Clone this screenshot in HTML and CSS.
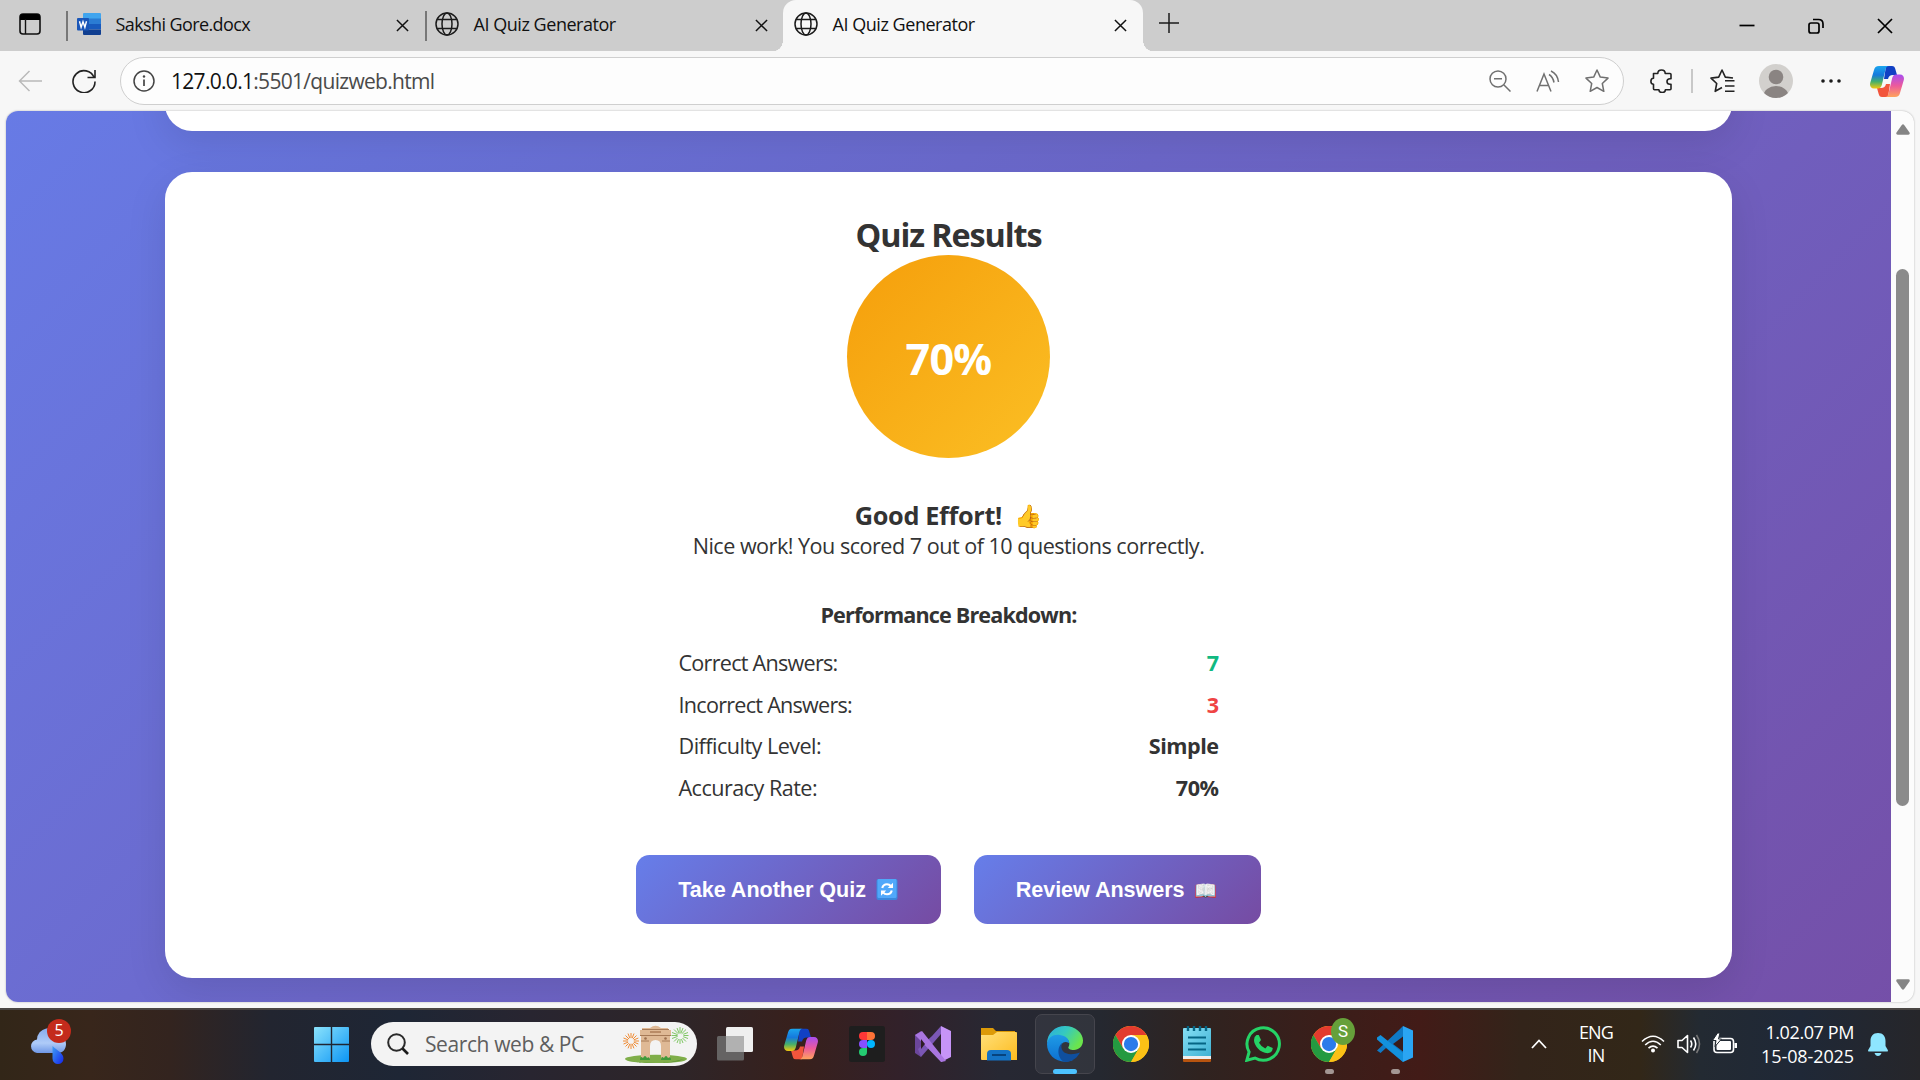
FILE: index.html
```html
<!DOCTYPE html>
<html lang="en">
<head>
<meta charset="utf-8">
<title>AI Quiz Generator</title>
<link rel="stylesheet" href="styles.css">
</head>
<body>
<svg class="defs" width="0" height="0" aria-hidden="true">
  <defs>
    <linearGradient id="cpA" x1="0" y1="0" x2="0" y2="1"><stop offset="0" stop-color="#1ba6ee"/><stop offset=".4" stop-color="#1579dd"/><stop offset=".7" stop-color="#46b06a"/><stop offset="1" stop-color="#f3c80e"/></linearGradient>
    <linearGradient id="cpB" x1="0" y1="0" x2="0" y2="1"><stop offset="0" stop-color="#a84df0"/><stop offset=".5" stop-color="#ec5a9c"/><stop offset="1" stop-color="#ffa45c"/></linearGradient>
    <linearGradient id="win" x1="0" y1="0" x2="1" y2="1"><stop offset="0" stop-color="#8be3fc"/><stop offset="1" stop-color="#0c95f5"/></linearGradient>
    <linearGradient id="cloud" x1="0" y1="0" x2="0" y2="1"><stop offset="0" stop-color="#86abee"/><stop offset=".6" stop-color="#afcbf8"/><stop offset="1" stop-color="#6f97e6"/></linearGradient>
    <linearGradient id="drop" x1="0" y1="0" x2="1" y2="1"><stop offset="0" stop-color="#3fa0f5"/><stop offset="1" stop-color="#1424ec"/></linearGradient>
    <linearGradient id="edgeTop" x1="0" y1="0" x2="1" y2=".5"><stop offset="0" stop-color="#2aa9e0"/><stop offset=".5" stop-color="#35c9c0"/><stop offset="1" stop-color="#6be54c"/></linearGradient>
    <linearGradient id="edgeLeft" x1="0" y1="0" x2="0" y2="1"><stop offset="0" stop-color="#1f9be6"/><stop offset="1" stop-color="#0c6fd0"/></linearGradient>
    <linearGradient id="folder" x1="0" y1="0" x2="1" y2="1"><stop offset="0" stop-color="#ffe07a"/><stop offset="1" stop-color="#fdbb1e"/></linearGradient>
    <linearGradient id="note" x1="0" y1="0" x2="1" y2="1"><stop offset="0" stop-color="#86dff5"/><stop offset="1" stop-color="#3fb2d3"/></linearGradient>
    <symbol id="close" viewBox="0 0 14 14"><path d="M1 1l12 12M13 1L1 13" stroke="#111" stroke-width="1.6" fill="none"/></symbol>
    <symbol id="globe" viewBox="0 0 24 24"><g fill="none" stroke="#1b1b1b" stroke-width="1.5"><circle cx="12" cy="12" r="11"/><ellipse cx="12" cy="12" rx="5" ry="11"/><path d="M2 7.6h20M2 16.4h20"/></g></symbol>
    <symbol id="copilot" viewBox="0 0 34 31">
      <path d="M16 0h6c2 0 2.800 1 3.300 3l1.700 6h-4c-3 0-4.300 1.500-5 4l-4 0z" fill="#1140c4"/>
      <path d="M18 31h-6c-2 0-2.800-1-3.300-3L7 22h4c3 0 4.300-1.500 5-4h4z" fill="#f2553c"/>
      <path id="ribbon" d="M9 0h10c-2 0-3 1.500-3.500 3.500L11.800 19c-.7 2.500-2 3.500-4 3.500H4C.8 22.500-.5 20 .2 17L4 4C4.700 1.500 6 0 9 0z" fill="url(#cpA)"/>
      <path d="M25 31H15c2 0 3-1.500 3.500-3.500L22.200 12c.7-2.500 2-3.500 4-3.500H30c3.200 0 4.500 2.500 3.800 5.500L30 27c-.7 2.500-2 4-5 4z" fill="url(#cpB)"/>
    </symbol>
    <symbol id="chrome" viewBox="0 0 48 48">
      <circle cx="24" cy="24" r="24" fill="#fbc116"/>
      <path d="M3.200 12A24 24 0 0 1 44.800 12H24L13.600 30z" fill="#e33b2e"/>
      <path d="M3.200 12A24 24 0 0 0 24 48L34.400 30 24 24 13.600 30z" fill="#249a41"/>
      <path d="M44.800 12H24l10.400 18L24 48A24 24 0 0 0 44.800 12z" fill="#fbc116"/>
      <circle cx="24" cy="24" r="12" fill="#fff"/><circle cx="24" cy="24" r="9.500" fill="#2b7bea"/>
    </symbol>
  </defs>
</svg>

<div class="screen">
  <header class="tabstrip">
    <svg class="workspaces" viewBox="0 0 22 22"><rect x="1" y="1" width="20" height="20" rx="3" fill="none" stroke="#111" stroke-width="1.6"/><path d="M1 7V4q0-3 3-3h14q3 0 3 3v3z" fill="#000"/><path d="M6.500 6v15" stroke="#111" stroke-width="1.400"/></svg>
    <div class="tab">
      <svg class="favicon" viewBox="0 0 24 22"><path d="M6 1q0-1 1-1h16q1 0 1 1v5H6z" fill="#41a5ee"/><path d="M6 5.500h18V11H6z" fill="#2b7cd3"/><path d="M6 11h18v5.500H6z" fill="#185abd"/><path d="M6 16.500h18V21q0 1-1 1H7q-1 0-1-1z" fill="#103f91"/><rect y="5" width="12" height="12.500" rx="1" fill="#1a56b8"/><path d="M2.500 8.300l1.600 6L6 8.700l1.900 5.600 1.600-6" fill="none" stroke="#fff" stroke-width="1.400"/></svg>
      <span class="tab-title docx">Sakshi Gore.docx</span>
      <svg class="x"><use href="#close"/></svg>
    </div>
    <div class="tab">
      <svg class="favicon"><use href="#globe"/></svg>
      <span class="tab-title">AI Quiz Generator</span>
      <svg class="x"><use href="#close"/></svg>
    </div>
    <div class="tab active">
      <svg class="favicon"><use href="#globe"/></svg>
      <span class="tab-title">AI Quiz Generator</span>
      <svg class="x"><use href="#close"/></svg>
    </div>
    <svg class="new-tab" viewBox="0 0 22 22"><path d="M11 1v20M1 11h20" stroke="#1b1b1b" stroke-width="1.500"/></svg>
    <div class="window-buttons">
      <svg viewBox="0 0 16 16"><path d="M.5 7.500h15" stroke="#000" stroke-width="1.700"/></svg>
      <svg viewBox="0 0 16 16"><rect x="1" y="5" width="10" height="10" rx="2" fill="none" stroke="#000" stroke-width="1.700"/><path d="M5 1.500h5.500q4.500 0 4.500 4.500v4" fill="none" stroke="#000" stroke-width="1.700"/></svg>
      <svg viewBox="0 0 16 16"><path d="M1 1l14 14M15 1L1 15" stroke="#000" stroke-width="1.700"/></svg>
    </div>
  </header>

  <nav class="toolbar">
    <svg class="back" viewBox="0 0 24 22"><path d="M24 11H1.500M11.500 1l-10 10 10 10" fill="none" stroke="#b9b9b9" stroke-width="1.500"/></svg>
    <svg class="reload" viewBox="0 0 24 24"><path d="M22.200 8.500A11 11 0 1 0 23 12.500M23 1v7.500h-7.500" fill="none" stroke="#222" stroke-width="1.600"/></svg>
    <div class="address">
      <svg class="info" viewBox="0 0 22 22"><circle cx="11" cy="11" r="10" fill="none" stroke="#444" stroke-width="1.500"/><path d="M11 9.500v6.500" stroke="#444" stroke-width="1.700"/><circle cx="11" cy="6.500" r="1.200" fill="#444"/></svg>
      <span class="url"><b>127.0.0.1</b>:5501/quizweb.html</span>
      <div class="address-actions">
        <svg width="22" height="22" viewBox="0 0 22 22"><g fill="none" stroke="#707070" stroke-width="1.500"><circle cx="9" cy="9" r="8"/><path d="M15 15l6.500 6.500M5 8.700h8"/></g></svg>
        <svg width="24" height="22" viewBox="0 0 24 22"><g fill="none" stroke="#707070" stroke-width="1.500"><path d="M1 21.500L8 4l7 17.500M3.500 15.500h9M13 4.500q4 2.500 5 8M15 1q6.500 3 7.500 11"/></g></svg>
        <svg width="24" height="24" viewBox="0 0 24 24"><path d="M12 1l3.300 7.100 7.700 1-5.700 5.400 1.500 7.800L12 18.500l-6.800 3.800 1.500-7.800L1 9.100l7.700-1z" fill="none" stroke="#707070" stroke-width="1.500" stroke-linejoin="round"/></svg>
      </div>
    </div>
    <svg class="puzzle" viewBox="0 0 22 24"><path d="M3.500 4.500h4.300C7.800 2.300 9.500 1 11.500 1s3.700 1.300 3.700 3.500H20q1 0 1 1v4.300h-1c-2 0-3 1.200-3 2.700s1 2.700 3 2.700h1v4.500q0 1-1 1h-4.600c0 1.800-1.300 2.800-3.200 2.800s-3.300-1-3.300-2.800H4.500q-1 0-1-1v-4.400C1.800 15.300.9 14 .9 12.300s.9-3 2.600-3z" fill="none" stroke="#222" stroke-width="1.600" stroke-linejoin="round"/></svg>
    <i class="rule"></i>
    <svg class="favs" viewBox="0 0 25 24"><path d="M12 18.500l-6.800 3.800 1.500-7.800L1 9.100l7.700-1L12 1l3.300 7.100 7.700.9M15 11.800h9.500M15 17h9.500M15 22.200h9.500" fill="none" stroke="#222" stroke-width="1.600" stroke-linejoin="round"/></svg>
    <svg class="avatar" viewBox="0 0 34 34"><clipPath id="av"><circle cx="17" cy="17" r="17"/></clipPath><circle cx="17" cy="17" r="17" fill="#d2d0cd"/><g clip-path="url(#av)" fill="#8a8482"><circle cx="17" cy="13" r="7.300"/><ellipse cx="17" cy="32" rx="12.500" ry="10"/></g></svg>
    <svg class="more" viewBox="0 0 20 4"><g fill="#1b1b1b"><circle cx="2" cy="2" r="1.800"/><circle cx="10" cy="2" r="1.800"/><circle cx="18" cy="2" r="1.800"/></g></svg>
    <svg class="copilot-btn"><use href="#copilot"/></svg>
  </nav>

  <div class="viewport">
    <main class="page">
      <section class="card previous"></section>
      <section class="card results">
        <h2>Quiz Results</h2>
        <div class="score">70%</div>
        <h3>Good Effort! <span class="emoji">👍</span></h3>
        <p>Nice work! You scored 7 out of 10 questions correctly.</p>
        <h4>Performance Breakdown:</h4>
        <dl class="breakdown">
          <div><dt>Correct Answers:</dt><dd class="good">7</dd></div>
          <div><dt>Incorrect Answers:</dt><dd class="bad">3</dd></div>
          <div><dt class="wide">Difficulty Level:</dt><dd>Simple</dd></div>
          <div><dt class="wide">Accuracy Rate:</dt><dd>70%</dd></div>
        </dl>
        <div class="actions">
          <button class="retake">Take Another Quiz <svg class="cycle" viewBox="0 0 22 22"><rect width="22" height="22" rx="2" fill="#3a87dc"/><rect x="1" y="0" width="20" height="20" rx="1.500" fill="#50a8fa"/><path d="M6 9.500q1-4 5-4 2.500 0 4.200 2M16 12q-1 4-5 4-2.500 0-4.200-2" fill="none" stroke="#fff" stroke-width="2.200"/><path d="M17.300 4v5.500h-5.500zM4.700 17.500V12h5.500z" fill="#fff"/></svg></button>
          <button class="review">Review Answers <span class="emoji">📖</span></button>
        </div>
      </section>
    </main>
    <aside class="scrollbar">
      <svg viewBox="0 0 14 11"><path d="M5.800 1q1.200-1.500 2.400 0l5.300 7.500q.9 2-1.200 2.200H1.700Q-.4 10.500.5 8.500z" fill="#858585"/></svg>
      <i class="thumb"></i>
      <svg class="down" viewBox="0 0 14 11"><path d="M5.800 1q1.200-1.500 2.400 0l5.300 7.500q.9 2-1.200 2.200H1.700Q-.4 10.500.5 8.500z" fill="#858585"/></svg>
    </aside>
  </div>

  <footer class="taskbar">
    <div class="weather">
      <svg viewBox="0 0 42 46"><path d="M7 36a6.800 6.800 0 0 1 0-13.500A11.500 11.500 0 0 1 29 18a9 9 0 0 1 7 9c0 5-3 9-8 9z" transform="translate(0 -2)" fill="url(#cloud)"/><path d="M22.500 27c5 5 11 7 11 12.500a5.400 5.400 0 0 1-11 0z" fill="url(#drop)"/></svg>
      <span class="count">5</span>
    </div>
    <svg class="start" viewBox="0 0 35 35"><g fill="url(#win)"><path d="M1 0h15.800v16.800H0V1q0-1 1-1zM18.200 0H34q1 0 1 1v15.800H18.200zM0 18.200h16.800V35H1q-1 0-1-1zM18.200 18.200H35V34q0 1-1 1H18.200z"/></g></svg>
    <div class="search">
      <svg class="lens" viewBox="0 0 22 22"><circle cx="9.500" cy="9.500" r="8.300" fill="none" stroke="#2a2a2a" stroke-width="2"/><path d="M15.500 15.500l5.500 5.500" stroke="#1b1b1b" stroke-width="2.700"/></svg>
      <span>Search web &amp; PC</span>
      <svg class="gate" viewBox="0 0 68 38">
        <ellipse cx="34" cy="34" rx="31" ry="4.300" fill="#7fae49"/><path d="M5 35q29 7 57-1-8 4-28 4T5 35z" fill="#558a33"/>
        <g stroke="#f08c35" stroke-width="1" stroke-dasharray="5 6 5"><path d="M9 8v16M1 16h16M3.500 10.500l11 11M14.500 10.500l-11 11M6 8.500l6 15M12 8.500l-6 15M1.500 13l15 6M1.500 19l15-6"/></g>
        <g stroke="#80c765" stroke-width="1" stroke-dasharray="6 6 6"><path d="M58 2v17M49.500 10.500h17M52 4.500l12 12M64 4.500l-12 12M55 3l6 15M61 3l-6 15M50 7.500l16 6M50 13.500l16-6"/></g>
        <path d="M28 3q5.500-4.500 11 0h7v2h3v5h-1v24h-9V21q0-6-5.500-6T28 21v13h-9V10h-1V5h2V3z" fill="#dfb995"/><path d="M18 10.500h31M20 4.500h27M19 16h8M40 16h8" stroke="#a67a57" stroke-width="1"/><circle cx="23.500" cy="13.500" r="1.300" fill="#9c6f4e"/><circle cx="43.500" cy="13.500" r="1.300" fill="#9c6f4e"/><path d="M28 7h11" stroke="#b98b66" stroke-width="2"/>
        <path d="M18 35q0-5 3-2 2-4 4 0 3-2 3 2zM39 35q0-5 3-2 2-4 4 0 3-2 3 2z" fill="#3f9a3a"/>
      </svg>
    </div>
    <div class="apps">
      <div><svg viewBox="0 0 36 36"><rect x="9" y="1" width="27" height="25" rx="1.500" fill="#efefef"/><rect y="10" width="27" height="24.500" rx="1.500" fill="#6f6f6f" opacity=".85"/><path d="M9 10h18v16H9z" fill="#b1b1b1"/></svg></div>
      <div><svg viewBox="-1 -2.500 36 36"><use href="#copilot" width="34" height="31"/></svg></div>
      <div><svg viewBox="0 0 36 36"><rect width="36" height="36" rx="2.500" fill="#1e1e1e"/><path d="M18 6h-4a4 4 0 0 0 0 8h4z" fill="#ff3737"/><path d="M18 6h4a4 4 0 0 1 0 8h-4z" fill="#ff7237"/><path d="M18 14h-4a4 4 0 0 0 0 8h4z" fill="#874fff"/><circle cx="22" cy="18" r="4" fill="#00b6ff"/><path d="M18 22h-4a4 4 0 1 0 4 4z" fill="#24cb71"/></svg></div>
      <div><svg viewBox="0 0 36 36"><path d="M0 9l6-4v26l-6-4z" fill="#6b469b"/><path d="M6 31l20-23V0L17 10 3 23z" fill="#7b57b5"/><path d="M26 0l10 5v26l-10 5z" fill="#c694f7"/><path d="M0 9l7-4 24 30-5 1L3 12z" fill="#a975e0"/><path d="M6 13v10l4-5z" fill="#2d1c24"/></svg></div>
      <div><svg viewBox="0 0 36 36"><path d="M0 2h12l3 3H34v8H0z" fill="#dc9a08"/><path d="M0 9h12l4-3h19q1 0 1 1v27H1q-1 0-1-1z" fill="url(#folder)"/><path d="M6 34.500V28q0-4 4-4h16q4 0 4 4v6.500z" fill="#1473c5"/><path d="M11 29h14" stroke="#07437d" stroke-width="2"/></svg></div>
      <div class="running current"><svg viewBox="0 0 36 36"><path d="M0 18C0 7 8 0 18 0c11 0 18 7.500 18 14.500 0 6-4.500 9.500-9 9.500-4 0-6.500-1.500-5.500-3 2.500-4-.5-10-7-10C7 11 1 14 0 18z" fill="url(#edgeTop)"/><path d="M0 18C1 11 7 8 13 9c6 .8 9.500 4.500 9 8-6-3-9 2-8.500 6.500C14 30 20 34 26 34 13 39.500 0 31 0 18z" fill="url(#edgeLeft)"/><path d="M15 17c-3 9 5 14 18 9.500C29 34 23 36 18 36 11 34 9 22 15 17z" fill="#0f4f9e"/></svg></div>
      <div><svg><use href="#chrome"/></svg></div>
      <div><svg viewBox="0 0 36 36"><path d="M4 31h28v4q0 1-1 1H5q-1 0-1-1z" fill="#b8540f"/><path d="M4 29h28v4H4z" fill="#eee"/><path d="M4 3q0-1 1-1h26q1 0 1 1v27H4z" fill="url(#note)"/><path d="M9 11.500h18M9 17.500h18M9 23.500h18" stroke="#056584" stroke-width="2"/><path d="M9 0v5M15 0v5M21 0v5M27 0v5" stroke="#056584" stroke-width="2.400"/></svg></div>
      <div><svg viewBox="0 0 36 36"><path d="M1.800 34.300l2.300-8.300A16.200 16.200 0 1 1 10 32z" fill="none" stroke="#25d366" stroke-width="3"/><path d="M11.500 9h2.300l2.200 5-2 2.800q2 3.800 6.300 5.700l2.400-2.800 5 2.400q.3 4.400-5 5.200C15 27 9 19.500 9 14q0-3.500 2.500-5z" fill="#25d366"/></svg></div>
      <div class="running"><svg><use href="#chrome"/></svg><span class="profile">S</span></div>
      <div class="running"><svg viewBox="0 0 36 36"><path d="M26 0v36L9 22 3.500 27 0 24.500 22 4z" fill="#0f79c5"/><path d="M0 11.500L3.500 9 26 27v9L0 13.500z" fill="#1391dd"/><path d="M26 10.500v15L16 18z" fill="#391c1a"/><path d="M26 0l10 4.500v27L26 36z" fill="#2aa5f3"/></svg></div>
    </div>
    <div class="tray">
      <svg class="chevron" viewBox="0 0 16 10"><path d="M1 9l7-7.500L15 9" fill="none" stroke="#fff" stroke-width="1.800"/></svg>
      <div class="lang"><span>ENG</span><span>IN</span></div>
      <svg class="wifi" viewBox="0 0 24 18"><g fill="none" stroke="#fff" stroke-width="1.600"><path d="M1 6.500Q12-4 23 6.500M4.200 10q7.800-7.500 15.600 0M7.500 13.200q4.500-4.300 9 0"/></g><circle cx="12" cy="15.500" r="2" fill="#fff"/></svg>
      <svg class="volume" viewBox="0 0 24 20"><g fill="none" stroke="#fff" stroke-width="1.600" stroke-linejoin="round"><path d="M1 6.500h4L10.500 1.500v17L5 13.500H1zM13.500 6.500q2.500 3.500 0 7M16.500 3.500q4.500 6.500 0 13"/><path d="M19.500 1q6 9 0 18" stroke="#777"/></g></svg>
      <svg class="battery" viewBox="0 0 24 20"><rect x="1" y="4.500" width="19.500" height="14" rx="3" fill="none" stroke="#fff" stroke-width="1.600"/><path d="M21.500 9H24v5h-2.500z" fill="#fff"/><rect x="3.500" y="7" width="14.500" height="9" rx="1" fill="#fff"/><path d="M4.500-1L-.5 6.500h3.500L2 12.500 8.500 5H5.500L7-1z" fill="#fff" stroke="#202830" stroke-width="1"/></svg>
      <div class="clock"><span>1.02.07 PM</span><span class="date">15-08-2025</span></div>
      <svg class="bell" viewBox="0 0 20 23"><path d="M10 0c5 0 7.500 3.500 7.500 8v5l2.300 4q.5 1.500-1 1.500H1.200q-1.500 0-1-1.500l2.300-4V8C2.500 3.500 5 0 10 0zM6.500 20h7q-1 3-3.500 3t-3.500-3z" fill="#8ee6ff"/></svg>
    </div>
  </footer>
</div>
</body>
</html>
```
FILE: styles.css
```css
* { box-sizing: border-box; }
body { margin: 0; font-family: "Open Sans", "Noto Sans", sans-serif; color: #333; }
.defs { display: block; height: 0; }
svg { display: block; flex: none; }
h2, h3, h4, p, dl, dd { margin: 0; }
.screen { width: 1920px; height: 1080px; display: flex; flex-direction: column; overflow: hidden; background: #f7f7f7; }

/* Tab strip */
.tabstrip { height: 51px; flex: none; display: flex; align-items: center; background: #cdcdcd; padding-left: 19px; }
.workspaces { width: 22px; height: 22px; margin: -3px 25px 0 0; }
.tab { width: 359px; height: 51px; display: flex; align-items: center; position: relative; padding: 0 16px 4px 11px; }
.tab:not(.active)::before { content: ""; position: absolute; left: 0; top: 11px; width: 1.5px; height: 30px; background: #777; }
.tab + .tab { padding-left: 10px; }
.tab .favicon { width: 24px; height: 24px; }
.tab-title { font-size: 18px; line-height: 24px; letter-spacing: -.46px; color: #111; margin-left: 14.5px; white-space: nowrap; }
.tab-title.docx { letter-spacing: -.6px; }
.tab .x { width: 13px; height: 13px; margin: 3px 0 0 auto; }
.tab.active { width: 360px; margin-left: -1px; background: #f7f7f7; border-radius: 13px 13px 0 0; padding-left: 11px; }
.tab.active::before, .tab.active::after { content: ""; position: absolute; bottom: 0; width: 9px; height: 11px; }
.tab.active::before { left: -9px; background: radial-gradient(ellipse 9px 11px at 0 0, #cdcdcd 98%, #f7f7f7); }
.tab.active::after { right: -9px; background: radial-gradient(ellipse 9px 11px at 100% 0, #cdcdcd 98%, #f7f7f7); }
.new-tab { width: 22px; height: 22px; margin: -5px 0 0 15px; }
.window-buttons { margin-left: auto; padding-right: 27px; display: flex; gap: 53px; }
.window-buttons svg { width: 16px; height: 16px; }

/* Toolbar */
.toolbar { height: 60px; flex: none; display: flex; align-items: center; padding-left: 18px; }
.back { width: 24px; height: 22px; margin-right: 30px; }
.reload { width: 24px; height: 24px; margin-right: 24px; }
.address { width: 1504px; height: 48px; flex: none; display: flex; align-items: center; background: #fdfdfd; border: 1.5px solid #cfcfcf; border-radius: 24px; padding: 0 14px 0 12px; }
.info { width: 22px; height: 22px; }
.url { font-size: 21px; line-height: 28px; letter-spacing: -.7px; color: #4a4a4a; margin-left: 16px; }
.url b { font-weight: 400; color: #111; }
.address-actions { margin-left: auto; display: flex; align-items: center; gap: 25px; }
.puzzle { width: 22px; height: 24px; margin-left: 26px; }
.rule { width: 2px; height: 24px; background: #c8c8c8; margin: 0 17px 0 19px; }
.favs { width: 25px; height: 24px; }
.avatar { width: 34px; height: 34px; margin-left: 24px; }
.more { width: 20px; height: 4px; margin-left: 28px; }
.copilot-btn { width: 34px; height: 31px; margin-left: 29px; }

/* Browser viewport */
.viewport { height: 891px; flex: none; margin: 0 6px; display: flex; border-radius: 12px; overflow: hidden; background: #fcfcfc; box-shadow: 0 0 2px #aaa; }
.page { width: 1885px; height: 891px; padding-left: 159px; overflow: hidden; background: linear-gradient(135deg, #667eea 0%, #764ba2 100%) 0 -219px / 100% 1392px no-repeat; }
.card { width: 1567px; background: #fff; border-radius: 27px; box-shadow: 0 13px 40px rgba(0, 0, 0, .1); }
.previous { height: 220px; margin-top: -200px; }
.results { height: 806px; margin-top: 41px; padding-top: 42px; display: flex; flex-direction: column; align-items: center; font-size: 21.6px; }
.results h2 { font-size: 32.4px; line-height: 41px; letter-spacing: -1.1px; }
.score { width: 203px; height: 203px; border-radius: 50%; background: linear-gradient(135deg, #f59e0b, #fbbf24); color: #fff; font-size: 43.2px; font-weight: 700; letter-spacing: -.8px; display: flex; align-items: center; justify-content: center; padding-top: 4px; }
.emoji { font-family: "Noto Color Emoji", sans-serif; font-weight: 400; letter-spacing: 0; }
.results h3 { font-size: 25.3px; line-height: 32px; height: 32px; letter-spacing: -.36px; margin-top: 41px; white-space: nowrap; }
.results h3 .emoji { font-size: 22.5px; line-height: 1; margin-left: 6px; position: relative; top: -1px; }
.results p { line-height: 29px; letter-spacing: -.51px; }
.results h4 { font-size: 21.6px; line-height: 29px; letter-spacing: -.85px; margin-top: 40px; }
.breakdown { width: 540px; margin-top: 13px; }
.breakdown div { display: flex; justify-content: space-between; line-height: 41.6px; }
.breakdown dt { letter-spacing: -.74px; }
.breakdown dt.wide { letter-spacing: -.53px; }
.breakdown dd { font-weight: 700; letter-spacing: -.5px; }
.breakdown .good { color: #10b981; }
.breakdown .bad { color: #ef4444; }
.actions { display: flex; gap: 32.5px; margin-top: 47px; }
.actions button { height: 69px; border: 0; border-radius: 13.5px; padding: 0 0 0 42px; background: linear-gradient(135deg, #667eea, #764ba2); color: #fff; font: 700 21.6px "Liberation Sans", Arial, sans-serif; display: flex; align-items: center; white-space: pre; }
.actions .retake { width: 305px; letter-spacing: -.04px; }
.actions .review { width: 287px; letter-spacing: -.07px; }
.actions .emoji { font-size: 18.5px; margin: 2px 0 0 4px; }
.cycle { width: 22px; height: 21px; margin: 0 0 1px 4px; }

/* Scrollbar */
.scrollbar { width: 23px; display: flex; flex-direction: column; align-items: center; padding: 13px 0 12px; }
.scrollbar svg { width: 14px; height: 11px; }
.scrollbar .down { transform: rotate(180deg); margin-top: auto; }
.thumb { width: 13px; height: 537px; margin-top: 134px; border-radius: 7px; background: #8b8b8b; }

/* Taskbar */
.taskbar { margin-top: 6px; padding-bottom: 2px; height: 72px; flex: none; display: flex; align-items: center; color: #fff; border-top: 2px solid #4a4644;
  background: linear-gradient(90deg, #322618 0, #38261b 90px, #33241f 170px, #222530 270px, #1e2635 400px, #282530 530px, #2e2528 680px, #38201c 800px, #32212a 900px, #272833 1000px, #252830 1100px, #2f2320 1200px, #3a1e1a 1320px, #421b17 1420px, #33241a 1520px, #322718 1640px, #232a32 1700px, #1f2837 1800px, #26262a 1920px); }
.weather { width: 42px; height: 46px; margin-left: 30px; position: relative; }
.weather svg { width: 42px; height: 46px; margin-top: -2px; }
.count { position: absolute; left: 17px; top: -2px; width: 24px; height: 24px; border-radius: 50%; background: #c42b1c; font-size: 16px; line-height: 23px; text-align: center; }
.start { width: 35px; height: 35px; margin-left: 242px; }
.search { width: 326px; height: 44px; border-radius: 22px; background: #f3f3f3; margin-left: 22px; display: flex; align-items: center; padding-left: 16px; color: #5e5e5e; font-size: 21px; line-height: 28px; letter-spacing: -.4px; white-space: nowrap; }
.lens { width: 22px; height: 22px; margin-right: 16px; }
.gate { width: 68px; height: 38px; margin-left: 38px; }
.apps { display: flex; margin-left: 5px; }
.apps > div { width: 66px; height: 60px; position: relative; display: flex; justify-content: center; align-items: center; }
.apps svg { width: 36px; height: 36px; }
.current::before { content: ""; position: absolute; inset: 0 3px; border: 1px solid #45454d; border-radius: 7px; background: rgba(255, 255, 255, .06); }
.apps .current svg { position: relative; }
.running::after { content: ""; position: absolute; bottom: 0; left: 28.5px; width: 9px; height: 5px; border-radius: 3px; background: #a39693; }
.running.current::after { left: 21px; width: 24px; background: #4cc2ff; }
.profile { position: absolute; left: 35px; top: 4px; width: 24px; height: 27px; border-radius: 50%; background: #66a03a; font: 17px/27px Roboto, sans-serif; text-align: center; }
.tray { margin-left: auto; padding-right: 32px; display: flex; align-items: center; font-size: 18px; line-height: 23px; }
.tray span { display: block; }
.chevron { width: 16px; height: 10px; }
.lang { width: 50px; margin-left: 24px; text-align: center; letter-spacing: -.8px; }
.wifi { width: 24px; height: 18px; margin-left: 20px; }
.volume { width: 24px; height: 20px; margin-left: 12px; }
.battery { width: 24px; height: 20px; margin-left: 12px; overflow: visible; }
.clock { width: 102px; margin: -1px 0 0 15px; text-align: right; letter-spacing: -.4px; line-height: 24px; }
.date { letter-spacing: -.1px; }
.bell { width: 20px; height: 23px; margin-left: 14px; }
```
